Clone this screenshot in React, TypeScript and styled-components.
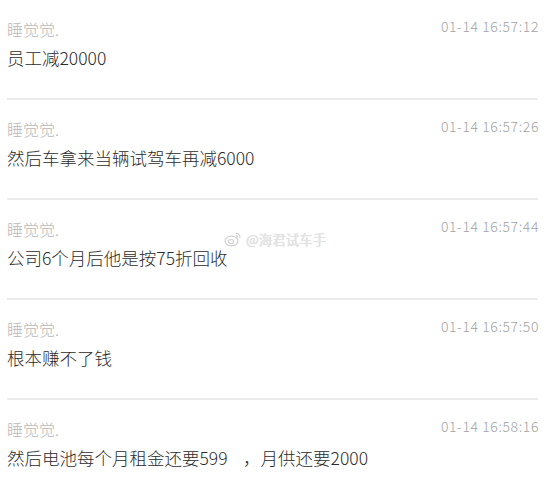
import React from "react";
import styled, { createGlobalStyle } from "styled-components";

const Global = createGlobalStyle`
  html, body { margin: 0; padding: 0; background: #fff; }
  body { font-family: "Noto Sans CJK SC", "Noto Sans", sans-serif; }
`;

const Page = styled.div`
  position: relative;
  width: 557px;
  height: 485px;
  overflow: hidden;
  background: #fff;
`;

const List = styled.div`
  display: flex;
  flex-direction: column;
  padding: 0 19px 0 7px;
`;

const Item = styled.div`
  box-sizing: border-box;
  height: 100px;
  padding-top: 17px;
  border-bottom: 2px solid #ececec;
  display: flex;
  flex-direction: column;
`;

const Header = styled.div`
  display: flex;
  justify-content: space-between;
  align-items: flex-start;
`;

const Name = styled.span`
  font-size: 16px;
  line-height: 24px;
  font-weight: 300;
  color: #b8b8b8;
`;

const Time = styled.span`
  font-size: 14px;
  line-height: 20px;
  font-weight: 300;
  letter-spacing: 0.6px;
  color: #a3a3a3;
  margin-top: -1px;
  margin-right: -1px;
`;

const Message = styled.div`
  margin-top: 4px;
  font-size: 17.5px;
  line-height: 26px;
  font-weight: 300;
  color: #2b2b2b;
  white-space: pre;
`;

const Watermark = styled.div`
  position: absolute;
  left: 224px;
  top: 230px;
  display: flex;
  align-items: center;
  gap: 4px;
  color: #e4e4e4;
  font-size: 13.5px;
  line-height: 18px;
  pointer-events: none;
  text-shadow: 0 0 1px #d0d0d0;
`;

const items = [
  { time: "01-14 16:57:12", text: "员工减20000" },
  { time: "01-14 16:57:26", text: "然后车拿来当辆试驾车再减6000" },
  { time: "01-14 16:57:44", text: "公司6个月后他是按75折回收" },
  { time: "01-14 16:57:50", text: "根本赚不了钱" },
  { time: "01-14 16:58:16", text: "然后电池每个月租金还要599    ，月供还要2000" },
];

const WeiboLogo = () => (
  <svg width="18" height="16" viewBox="0 0 18 16" fill="none" stroke="#d2d2d2" strokeWidth="1.2">
    <ellipse cx="7.5" cy="10" rx="6.5" ry="4.8" />
    <ellipse cx="7" cy="10.5" rx="2.6" ry="2" />
    <path d="M11.5 2.5 a4 4 0 0 1 4.5 4.2" />
    <path d="M11.8 4.8 a2 2 0 0 1 2.2 2" />
  </svg>
);

export default function App() {
  return (
    <Page>
      <Global />
      <List>
        {items.map((it, i) => (
          <Item key={i}>
            <Header>
              <Name>睡觉觉.</Name>
              <Time>{it.time}</Time>
            </Header>
            <Message>{it.text}</Message>
          </Item>
        ))}
      </List>
      <Watermark>
        <WeiboLogo />
        <span>@海君试车手</span>
      </Watermark>
    </Page>
  );
}
